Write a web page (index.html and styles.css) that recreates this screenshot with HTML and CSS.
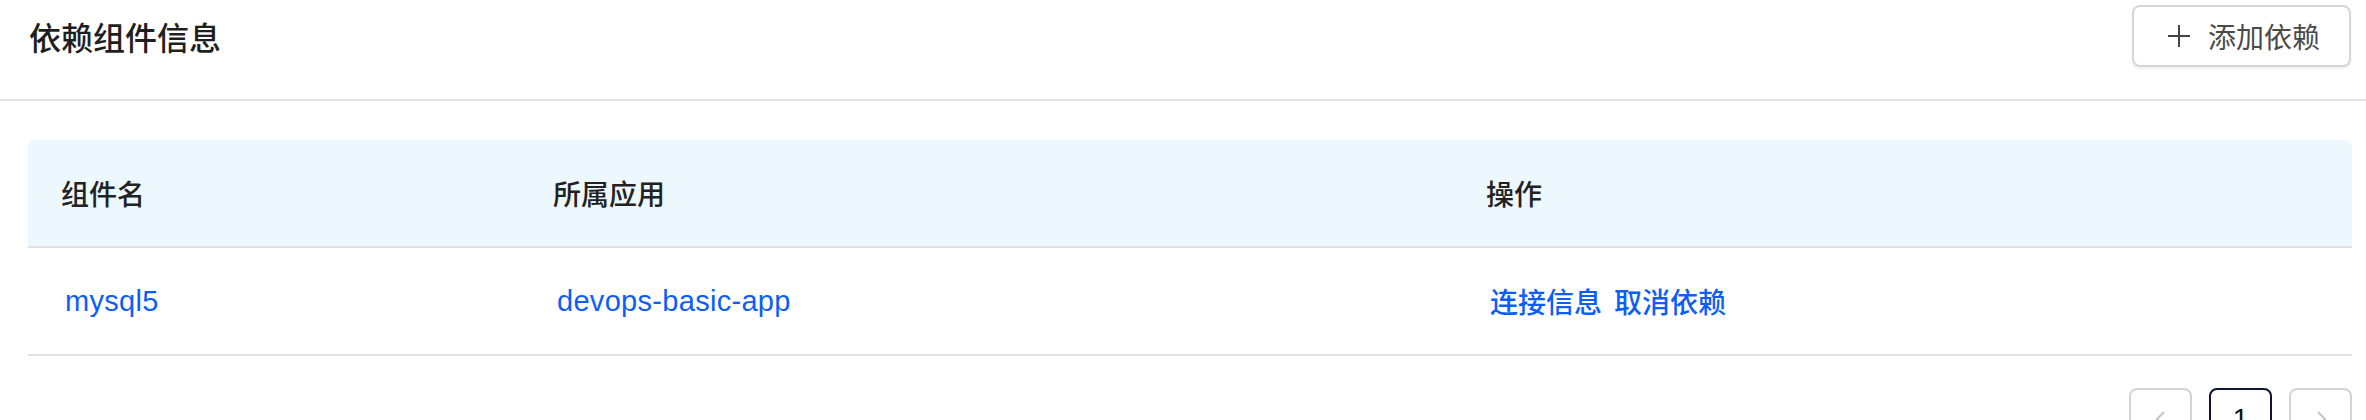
FILE: index.html
```html
<!DOCTYPE html>
<html lang="zh">
<head>
<meta charset="utf-8">
<title>依赖组件信息</title>
<link rel="stylesheet" href="styles.css">
</head>
<body>
<div class="topbar">
  <h2 class="title">依赖组件信息</h2>
  <button class="btn-add" type="button">
    <svg class="plus" viewBox="0 0 24 24" width="24" height="24"><path d="M12 1v22M1 12h22" stroke="#444" stroke-width="2" fill="none"/></svg>
    <span>添加依赖</span>
  </button>
</div>
<div class="divider"></div>
<div class="content">
  <div class="table">
    <div class="row thead">
      <div class="cell">组件名</div>
      <div class="cell">所属应用</div>
      <div class="cell">操作</div>
    </div>
    <div class="row tbody">
      <div class="cell"><a class="link latin">mysql5</a></div>
      <div class="cell"><a class="link latin">devops-basic-app</a></div>
      <div class="cell actions"><a class="link">连接信息</a><a class="link">取消依赖</a></div>
    </div>
  </div>
  <div class="pager">
    <button class="pg" type="button"><svg viewBox="0 0 24 24" width="24" height="24"><path d="M15 5l-7 7 7 7" stroke="#c4c4c4" stroke-width="2" fill="none"/></svg></button>
    <button class="pg current" type="button">1</button>
    <button class="pg" type="button"><svg viewBox="0 0 24 24" width="24" height="24"><path d="M9 5l7 7-7 7" stroke="#c4c4c4" stroke-width="2" fill="none"/></svg></button>
  </div>
</div>
</body>
</html>
```
FILE: styles.css
```css
* { box-sizing: border-box; }
html, body { margin: 0; padding: 0; background: #fff; overflow: hidden; }
body {
  font-family: "Liberation Sans", "Noto Sans CJK SC", sans-serif;
  color: #222;
}
.topbar {
  display: flex;
  align-items: center;
  justify-content: space-between;
  height: 62px;
  margin-top: 5px;
  padding: 0 15px 0 29px;
}
.title {
  margin: 0;
  font-size: 32px;
  font-weight: 500;
  line-height: 1;
  color: #1f1f1f;
  font-family: "Noto Sans CJK SC", sans-serif;
}
.btn-add {
  display: flex;
  align-items: center;
  gap: 17px;
  width: 219px;
  height: 62px;
  padding: 0 0 0 33px;
  border: 2px solid #d6d6d6;
  border-radius: 8px;
  background: #fff;
  box-shadow: 0 2px 3px rgba(0,0,0,0.06);
  font-family: "Noto Sans CJK SC", sans-serif;
  font-size: 28px;
  color: #4a4a4a;
  line-height: 1;
}
.plus { width: 24px; height: 24px; flex: none; }
.divider {
  height: 2px;
  background: #e4e4e4;
  margin-top: 32px;
}
.content {
  padding: 39px 14px 0 28px;
}
.row {
  display: grid;
  grid-template-columns: 492px 933px 1fr;
  height: 108px;
  align-items: center;
  border-bottom: 2px solid #e1e1e1;
}
.thead {
  background: #edf7fe;
  border-radius: 8px 8px 0 0;
  font-family: "Noto Sans CJK SC", sans-serif;
  font-size: 28px;
  font-weight: 500;
  color: #222;
}
.cell { padding-left: 33px; line-height: 1; }
.tbody .cell { padding-left: 37px; }
.link {
  color: #0d5ef6;
  font-size: 28px;
  cursor: pointer;
}
.link.latin { font-size: 29px; letter-spacing: 0.3px; }
.actions { display: flex; gap: 12px; font-family: "Noto Sans CJK SC", sans-serif; }
.actions .link { font-weight: 500; }
.pager {
  display: flex;
  justify-content: flex-end;
  gap: 17px;
  margin-top: 32px;
}
.pg {
  width: 63px;
  height: 62px;
  border: 2px solid #d4d4d4;
  border-radius: 8px;
  background: #fff;
  display: flex;
  align-items: center;
  justify-content: center;
  font-family: "Liberation Sans", sans-serif;
  font-size: 28px;
  color: #111;
  padding: 0;
}
.pg.current { border-color: #0d1633; font-weight: 500; }
```
